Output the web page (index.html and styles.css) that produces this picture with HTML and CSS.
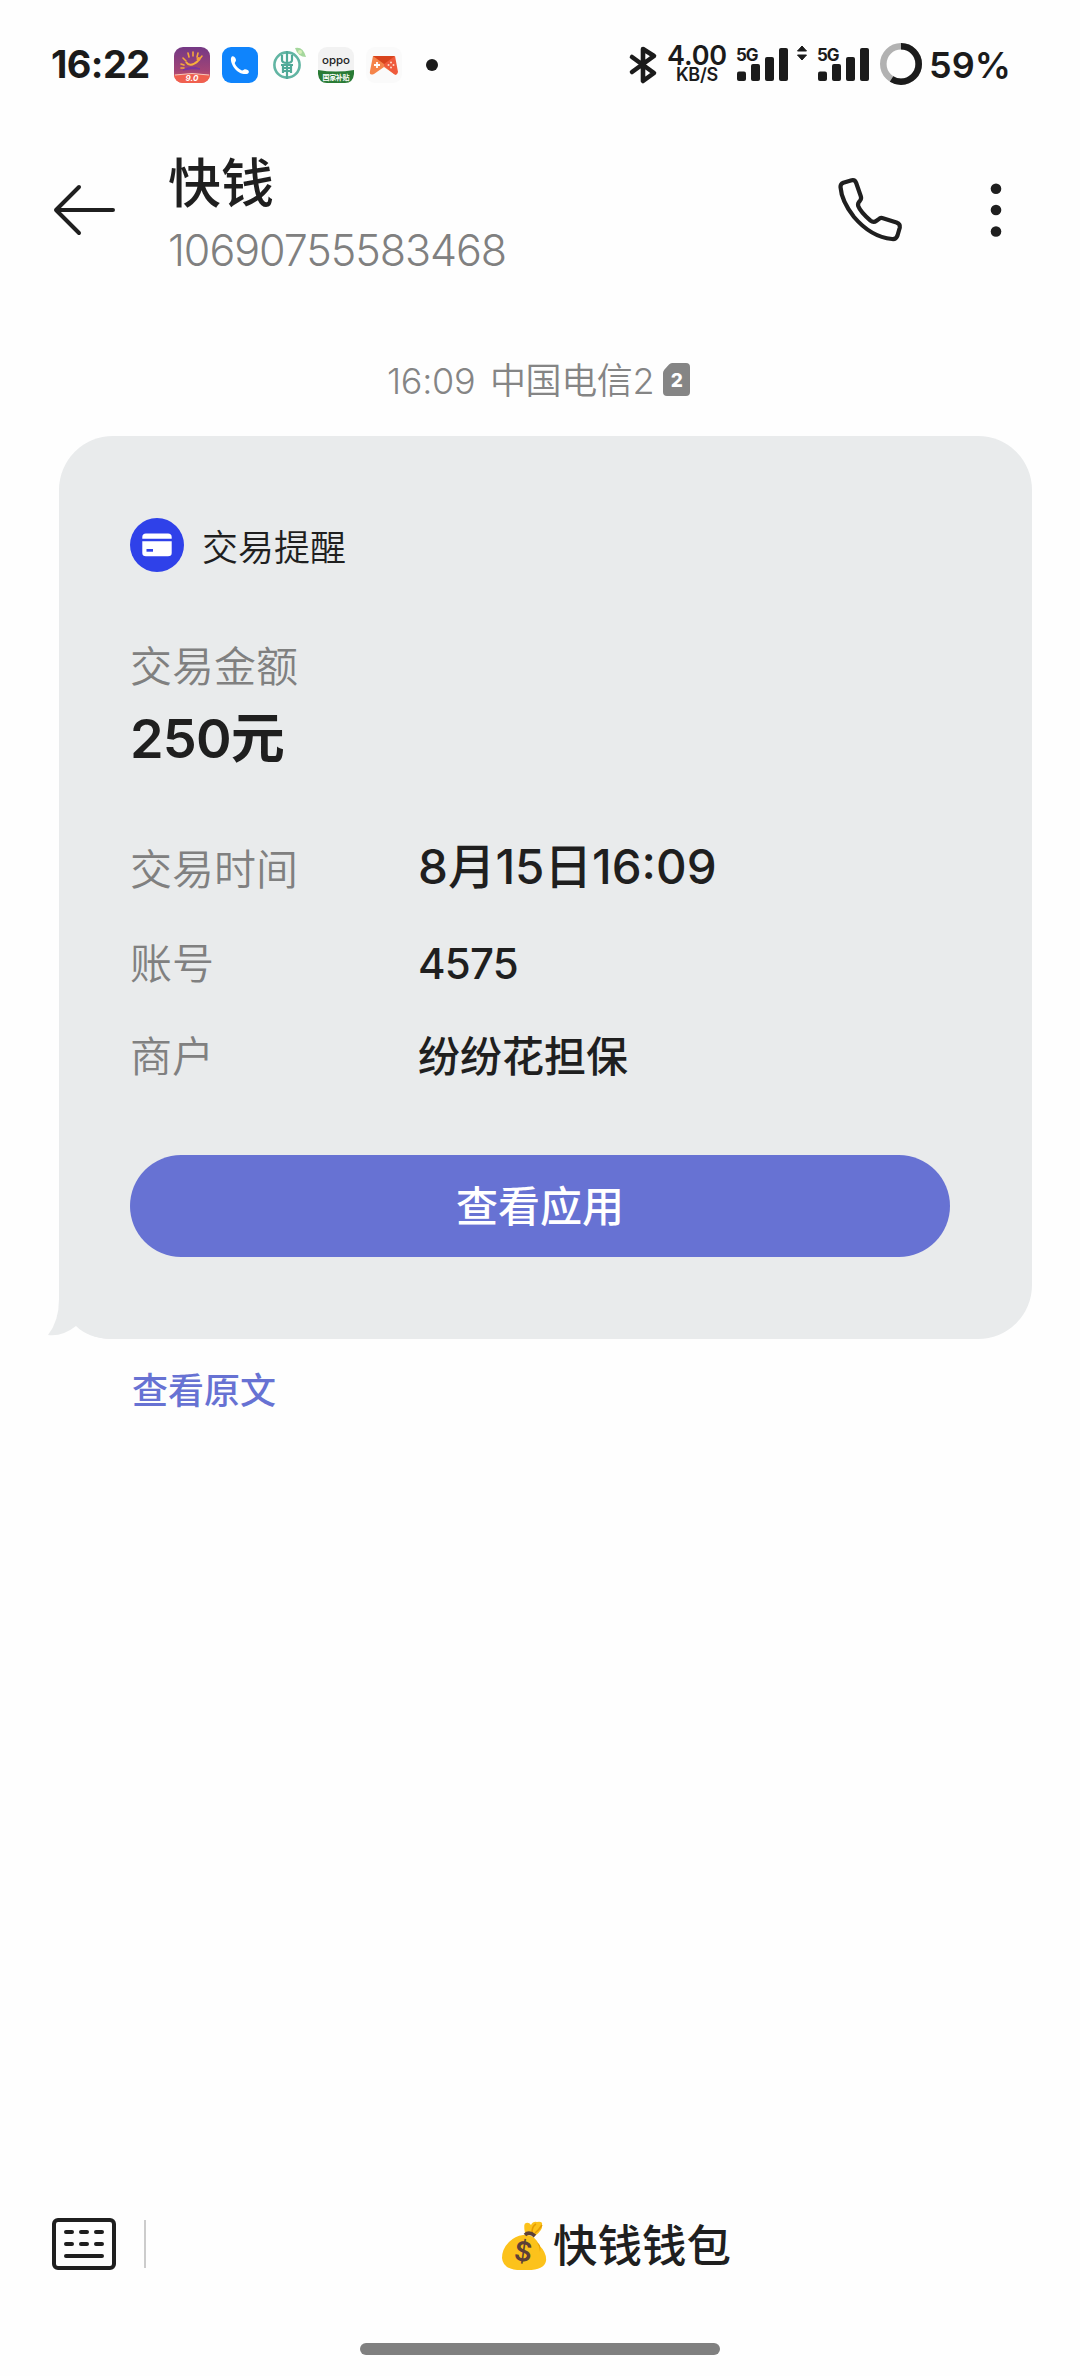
FILE: index.html
```html
<!DOCTYPE html>
<html lang="zh-CN">
<head>
<meta charset="utf-8">
<title>快钱</title>
<link rel="stylesheet" href="styles.css">
</head>
<body>
<div class="screen">
  <header class="status">
    <div class="clock">16:22</div>
    <div class="notifications">
      <svg class="app" viewBox="0 0 36 36">
        <defs><linearGradient id="sun" x1="0" y1="0" x2="0" y2="1"><stop offset="0" stop-color="#743985"/><stop offset=".65" stop-color="#a14476"/><stop offset="1" stop-color="#e05a60"/></linearGradient></defs>
        <rect width="36" height="36" rx="9" fill="url(#sun)"/>
        <path d="M0 28Q18 25 36 28A9 8 0 0 1 27 36H9A9 8 0 0 1 0 28Z" fill="#f0604f"/>
        <path d="M1 28Q18 25 35 28" stroke="#f6c9bd" fill="none"/>
        <path d="M7 17l3 1M9 11l3 3M14 6l1 4M19 5v4M24 6l-1 4M28 9l-4 5M7 21h3" stroke="#f5a83c" stroke-width="1.6" stroke-linecap="round"/>
        <path d="M12 15q4 6 12-1" stroke="#f8b03c" stroke-width="2" fill="none"/><circle cx="24.500" cy="12" r="2" fill="#f5a03c"/>
        <path d="M9 23q9-5 17-1q-8-1-17 1" fill="#7a35a0" stroke="#7a35a0"/>
        <text x="18" y="34" class="tiny-version">9.0</text>
      </svg>
      <svg class="app" viewBox="0 0 36 36">
        <rect width="36" height="36" rx="9" fill="#0f84fc"/>
        <path d="M10.500 9.300C8.500 10 8.600 13 9.700 16.200C11.700 21.600 15.500 25.400 20.400 26.700C23.500 27.500 26.600 27 26.900 24.900C27.100 23 24.200 22.100 22.800 22.300C21.500 22.500 20.900 24 19.500 23.300C16.500 21.800 14.200 19.500 12.900 16.800C12.300 15.400 14 14.500 14 13.200C14 11.700 12.500 8.800 10.500 9.300Z" fill="#fff"/>
      </svg>
      <svg class="app" viewBox="0 0 36 36">
        <circle cx="17" cy="18" r="12.600" fill="none" stroke="#62b5a3" stroke-width="2.600"/>
        <path d="M17 4v28M12 8v5q0 3 5 3t5-3V8M11 18h12M13 21h8M13 24h8M13 18v8M21 18v8" fill="none" stroke="#51aa98" stroke-width="2.200"/>
        <path d="M25 1Q33-1 36 10Q28 10 25 1Z" fill="#a5d79c"/><circle cx="30" cy="5" r="2" fill="#d5edb8"/>
      </svg>
      <svg class="app" viewBox="0 0 36 36">
        <rect width="36" height="36" rx="9" fill="#f2f2f2"/>
        <path d="M0 23Q18 26 36 23V27Q35 36 27 36H9Q1 36 0 27Z" fill="#297b35"/>
        <text x="18" y="17" class="tiny-brand" textLength="28" lengthAdjust="spacingAndGlyphs">oppo</text>
        <text x="18" y="33" class="tiny-label" textLength="27">国家补贴</text>
      </svg>
      <svg class="app" viewBox="0 0 36 36">
        <rect width="36" height="36" rx="9" fill="#fafafa"/>
        <path d="M7 9H28L31 25Q31 29 28 27L18 20L8 27Q3 29 4 24Z" fill="#f5844a"/>
        <path d="M18 15L29 9L32 25Q31 29 28 27L18 19Z" fill="#ef5a3c"/>
        <path d="M7 9H29L18 17Z" fill="#d8431c"/>
        <path d="M8 18h6M11 15v6" stroke="#fff" stroke-width="1.800"/>
        <g fill="#ffd8c8"><circle cx="25" cy="15.500" r="1"/><circle cx="25" cy="20.500" r="1"/><circle cx="22.500" cy="18" r="1"/><circle cx="27.500" cy="18" r="1"/></g>
      </svg>
      <span class="more-dot"></span>
    </div>
    <div class="indicators">
      <svg class="bluetooth" viewBox="0 0 28 38"><path d="M3 11L25 27L14 35V3L25 10L3 26" fill="none" stroke="#1b1b1b" stroke-width="4.600" stroke-linecap="round" stroke-linejoin="round"/></svg>
      <div class="speed"><span class="rate">4.00</span><span class="unit">KB/S</span></div>
      <div class="signal"><span class="net">5G</span><svg viewBox="0 0 52 34"><g fill="#1b1b1b"><rect y="23.500" width="9" height="9.500" rx="2"/><rect x="14" y="16" width="9" height="17" rx="2"/><rect x="28" y="9" width="9" height="24" rx="2"/><rect x="42" width="9" height="33" rx="2"/></g></svg></div>
      <svg class="traffic" viewBox="0 0 12 16"><path d="M6 1L10.500 6H1.500ZM6 15L10.500 10H1.500Z" fill="#1b1b1b" stroke="#1b1b1b" stroke-linejoin="round"/></svg>
      <div class="signal"><span class="net">5G</span><svg viewBox="0 0 52 34"><g fill="#1b1b1b"><rect y="23.500" width="9" height="9.500" rx="2"/><rect x="14" y="16" width="9" height="17" rx="2"/><rect x="28" y="9" width="9" height="24" rx="2"/><rect x="42" width="9" height="33" rx="2"/></g></svg></div>
      <svg class="battery" viewBox="0 0 42 42"><circle cx="21" cy="21" r="17.700" fill="none" stroke="#b2b2b2" stroke-width="6.600"/><circle cx="21" cy="21" r="17.700" fill="none" stroke="#1b1b1b" stroke-width="6.600" pathLength="100" stroke-dasharray="59 41" transform="rotate(-90 21 21)"/></svg>
      <span class="percent">59%</span>
    </div>
  </header>

  <div class="titlebar">
    <svg class="back" viewBox="0 0 64 52"><path d="M27 3L4 26L27 49M4 26H61" fill="none" stroke="#1f1f1f" stroke-width="4" stroke-linecap="round" stroke-linejoin="round"/></svg>
    <div class="contact">
      <h1 class="name">快钱</h1>
      <div class="number">10690755583468</div>
    </div>
    <svg class="call" viewBox="0 0 66 66"><path d="M5.300 5.800L13.700 3.200Q17 2.500 18.200 6L22.800 19.300Q23.700 21.800 22 23.700Q19.400 26.200 20.200 29Q22.500 35 32.500 43.600Q35.500 46 38.500 43.800L41.500 41.600Q43 40.600 45 41.200L58.500 45.500Q62.500 47 61.800 50.500L59.500 58.500Q58 62.600 54 62Q33 60 16 40Q3.500 24 2.500 10Q2.400 7 5.300 5.800Z" fill="none" stroke="#1f1f1f" stroke-width="4.200" stroke-linejoin="round"/></svg>
    <svg class="menu" viewBox="0 0 12 54"><g fill="#1f1f1f"><circle cx="6" cy="5.700" r="5.300"/><circle cx="6" cy="27" r="5.300"/><circle cx="6" cy="48.500" r="5.300"/></g></svg>
  </div>

  <div class="stamp">
    <span class="stamp-time">16:09</span><span class="carrier">中国电信2</span>
    <svg class="sim" viewBox="0 0 27 33"><path d="M9 0H23Q27 0 27 4V29Q27 33 23 33H4Q0 33 0 29V10Q0 8 1.500 6.500L6 1.500Q7.300 0 9 0Z" fill="#858585"/><text x="13.700" y="24" class="sim-number">2</text></svg>
  </div>

  <main class="bubble">
    <svg class="tail" viewBox="0 0 62 60"><path d="M11 0V20Q11 42 0 56Q14 58 28 47Q40 59 62 60V0Z" fill="#e9ebec"/></svg>
    <div class="kind">
      <svg class="kind-icon" viewBox="0 0 54 54"><circle cx="27" cy="27" r="27" fill="#2f41e9"/><path d="M12.300 20.700V19Q12.300 15.500 16 15.500H38Q41.700 15.500 41.700 19V20.700ZM12.300 23.300H41.700V35Q41.700 38.300 38 38.300H16Q12.300 38.300 12.300 35Z" fill="#fff"/><rect x="16.500" y="31" width="6.500" height="2.700" fill="#2f41e9"/></svg>
      <span class="kind-name">交易提醒</span>
    </div>
    <div class="label amount-label">交易金额</div>
    <div class="amount">250元</div>
    <dl class="details">
      <dt class="label">交易时间</dt><dd class="value value-time">8月15日16:09</dd>
      <dt class="label">账号</dt><dd class="value value-account">4575</dd>
      <dt class="label">商户</dt><dd class="value">纷纷花担保</dd>
    </dl>
    <button class="open-app">查看应用</button>
  </main>
  <a class="original">查看原文</a>

  <footer class="toolbar">
    <svg class="keyboard" viewBox="0 0 64 52"><rect x="2" y="2" width="60" height="48" rx="4" fill="none" stroke="#1f1f1f" stroke-width="4"/><path d="M14 14h6M29 14h6M44 14h6M14 26h6M29 26h6M44 26h6M14 38h36" stroke="#1f1f1f" stroke-width="4" stroke-linecap="round"/></svg>
    <span class="divider"></span>
    <div class="wallet">
      <svg class="bag" viewBox="0 0 46 50"><path d="M24 12Q22 2 25 2Q28 1 30 4Q32 0 36 1Q42 0 41 4Q42 9 34 15Z" fill="#fcc21b"/><path d="M31 12Q31 5 35 3M34 12Q38 9 41 4" stroke="#e59c00" stroke-width="1.500" fill="none"/><path d="M22 14Q33 12 38 24Q46 32 45 40Q43 50 23 49Q2 50 1 37Q1 28 8 21Q14 15 22 14Z" fill="#fcc21b"/><path d="M36 21Q39 26 39 31Q40 25 38 23Z" fill="#e59c00"/><path d="M24 14Q28 10 34 15" stroke="#5d4037" stroke-width="3.600" fill="none"/><text x="22" y="40" class="dollar" transform="rotate(8 22 32)">$</text></svg>
      <span class="wallet-name">快钱钱包</span>
    </div>
  </footer>
  <div class="home"></div>
</div>
</body>
</html>
```
FILE: styles.css
```css
* { box-sizing: border-box; }
body { margin: 0; background: #fefefe; }
svg { display: block; flex: none; overflow: visible; }
.screen {
  width: 1080px; height: 2376px; display: flex; flex-direction: column;
  font-family: Inter, "Noto Sans CJK SC", sans-serif; color: #1f1f1f;
  background: #fefefe; white-space: nowrap; overflow: hidden;
}
.status { height: 130px; display: flex; align-items: center; padding: 0 0 0 51px; color: #1b1b1b; flex: none; }
.clock { width: 123px; font-size: 38px; font-weight: 700; line-height: 40px; letter-spacing: -.6px; margin-top: -3px; }
.notifications { display: flex; align-items: center; gap: 12px; width: 455px; }
.app { width: 36px; height: 36px; }
.more-dot { width: 12px; height: 12px; border-radius: 50%; background: #1b1b1b; margin-left: 12px; }
.tiny-version { font-size: 8px; font-weight: 700; font-style: italic; fill: #fff; text-anchor: middle; }
.tiny-brand { font-size: 11px; font-weight: 500; fill: #222; text-anchor: middle; }
.tiny-label { font-size: 7px; font-weight: 700; fill: #fff; text-anchor: middle; }
.indicators { display: flex; align-items: center; }
.bluetooth { width: 28px; height: 38px; }
.speed { display: flex; flex-direction: column; align-items: center; width: 60px; margin-left: 10px; margin-top: -1px; }
.rate { font-size: 27px; font-weight: 600; line-height: 20px; letter-spacing: -.2px; }
.unit { font-size: 18px; font-weight: 600; line-height: 17px; letter-spacing: -.2px; }
.signal { display: grid; width: 52px; margin-left: 10px; }
.signal svg { grid-area: 1 / 1; width: 52px; height: 34px; }
.net { grid-area: 1 / 1; font-size: 17px; font-weight: 700; line-height: 14px; letter-spacing: -1px; margin-left: -1px; }
.traffic { width: 12px; height: 16px; margin: -24px 0 0 7px; }
.battery { width: 42px; height: 42px; margin-left: 10px; margin-top: -2px; }
.percent { font-size: 36px; font-weight: 600; line-height: 40px; margin-left: 7px; margin-top: -1px; }

.titlebar { height: 160px; display: flex; align-items: center; padding-left: 52px; flex: none; }
.back { width: 64px; height: 52px; }
.contact { width: 670px; margin-left: 52px; padding-top: 9px; }
.name { margin: 0; font-size: 53px; font-weight: 500; line-height: 64px; }
.number { font-size: 43px; font-weight: 300; line-height: 56px; margin-top: 6px; color: #808080; letter-spacing: -1.050px; }
.call { width: 66px; height: 66px; }
.menu { width: 12px; height: 54px; margin-left: 86px; }

.stamp { height: 56px; margin-top: 63px; padding-left: 387px; display: flex; align-items: center; flex: none; font-size: 36px; font-weight: 350; line-height: 50px; color: #858585; }
.stamp-time { width: 103px; letter-spacing: -.3px; }
.carrier { width: 173px; letter-spacing: -.4px; }
.sim { width: 27px; height: 33px; margin-top: -3px; }
.sim-number { font-size: 19px; font-weight: 800; fill: #fff; text-anchor: middle; }

.bubble { position: relative; width: 973px; height: 903px; margin: 27px 0 0 59px; padding: 82px 82px 0 71px; flex: none; background: #e9ebec; border-radius: 54px 54px 54px 52px; }
.tail { position: absolute; left: -11px; bottom: 0; width: 62px; height: 60px; }
.kind { display: flex; align-items: center; height: 54px; }
.kind-icon { width: 54px; height: 54px; }
.kind-name { font-size: 36px; font-weight: 350; line-height: 50px; margin: 6px 0 0 18px; }
.label { font-size: 42px; font-weight: 350; line-height: 56px; color: #808080; }
.amount-label { margin-top: 67px; }
.amount { font-size: 54px; font-weight: 600; line-height: 70px; margin-top: 9px; letter-spacing: -.8px; }
.details { display: grid; grid-template-columns: 288px 1fr; grid-template-rows: 95px 93px 93px; align-items: center; margin: 48px 0 0; }
.value { margin: 0; font-size: 42px; font-weight: 500; line-height: 56px; }
.value-time { font-size: 47.500px; padding-bottom: 6px; }
.value-account { letter-spacing: -.8px; }
.open-app { display: block; width: 820px; height: 102px; margin: 52px 0 0; padding: 2px 0 0; border: 0; border-radius: 51px; background: #6772d3; color: #fff; font: 500 42px/56px Inter, "Noto Sans CJK SC", sans-serif; }
.original { margin: 27px 0 0 132px; font-size: 36px; font-weight: 500; line-height: 50px; color: #6772d3; }

.toolbar { margin-top: auto; height: 100px; display: flex; align-items: center; padding-left: 52px; flex: none; }
.keyboard { width: 64px; height: 52px; }
.divider { width: 2px; height: 48px; margin-left: 28px; background: #ccc; }
.wallet { display: flex; align-items: center; margin-left: 355px; gap: 6px; font-size: 44.500px; font-weight: 500; line-height: 60px; }
.wallet-name { padding-top: 4px; }
.bag { width: 46px; height: 50px; margin-top: 3px; }
.dollar { font-size: 27px; font-weight: 600; fill: #5d4037; text-anchor: middle; }
.home { width: 360px; height: 12px; margin: 49px auto 21px; border-radius: 6px; background: #808080; flex: none; }
```
